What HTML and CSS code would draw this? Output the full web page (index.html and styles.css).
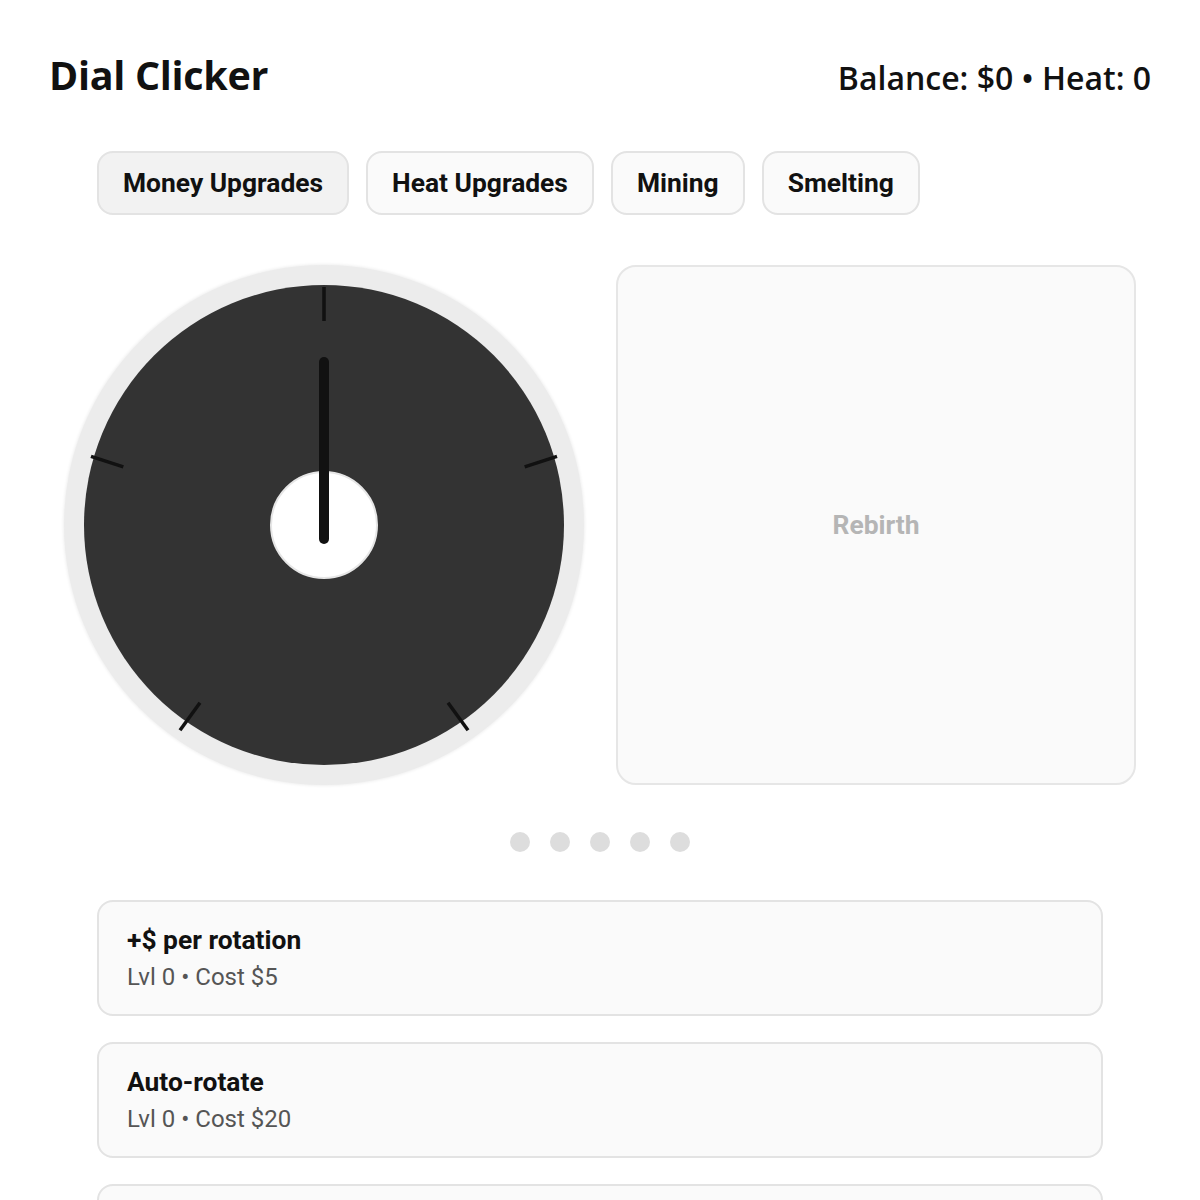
FILE: index.html
```html
<!DOCTYPE html>
<html>
<head>
<meta charset="utf-8">
<link rel="stylesheet" href="styles.css">
</head>
<body>
<div class="page">
  <header class="header">
    <h1 class="title">Dial Clicker</h1>
    <div class="stats">Balance: $0 • Heat: 0</div>
  </header>
  <div class="content">
    <nav class="tabs">
      <button class="tab active">Money Upgrades</button>
      <button class="tab">Heat Upgrades</button>
      <button class="tab">Mining</button>
      <button class="tab">Smelting</button>
    </nav>
  </div>
  <section class="stage">
    <div class="dial">
      <svg width="520" height="520" viewBox="0 0 520 520">
        <circle cx="260" cy="260" r="240" fill="#333333"/>
        <g stroke="#111111" stroke-width="3.5">
          <line x1="260" y1="22" x2="260" y2="56"/>
          <line x1="260" y1="22" x2="260" y2="56" transform="rotate(72 260 267)"/>
          <line x1="260" y1="22" x2="260" y2="56" transform="rotate(144 260 267)"/>
          <line x1="260" y1="22" x2="260" y2="56" transform="rotate(216 260 267)"/>
          <line x1="260" y1="22" x2="260" y2="56" transform="rotate(288 260 267)"/>
        </g>
        <circle cx="260" cy="260" r="53" fill="#ffffff" stroke="#e6e6e6" stroke-width="2"/>
        <line x1="260" y1="97" x2="260" y2="274" stroke="#111111" stroke-width="10" stroke-linecap="round"/>
      </svg>
    </div>
    <div class="panel">Rebirth</div>
  </section>
  <div class="dots">
    <span class="dot"></span><span class="dot"></span><span class="dot"></span><span class="dot"></span><span class="dot"></span>
  </div>
  <div class="content">
    <div class="cards">
      <div class="card">
        <div class="card-title">+$ per rotation</div>
        <div class="card-sub">Lvl 0 • Cost $5</div>
      </div>
      <div class="card">
        <div class="card-title">Auto-rotate</div>
        <div class="card-sub">Lvl 0 • Cost $20</div>
      </div>
      <div class="card">
        <div class="card-title">Heat sink</div>
        <div class="card-sub">Lvl 0 • Cost $50</div>
      </div>
    </div>
  </div>
</div>
</body>
</html>
```

FILE: styles.css
```css
* { box-sizing: border-box; }
html, body { margin: 0; padding: 0; background: #ffffff; }
body { font-family: Roboto, "Liberation Sans", sans-serif; color: #111111; }
.page { padding: 48px 49px 0; }
.header {
  display: flex;
  justify-content: space-between;
  align-items: baseline;
}
.title {
  margin: 0;
  font-family: "Open Sans", sans-serif;
  font-weight: 700;
  font-size: 39.5px;
  letter-spacing: -0.3px;
  color: #111111;
}
.stats {
  font-family: "Open Sans", sans-serif;
  font-weight: 600;
  font-size: 32px;
  color: #111111;
}
.content { padding: 0 48px; }
.tabs {
  display: flex;
  gap: 17px;
  margin-top: 49px;
}
.tab {
  height: 64px;
  padding: 0 24px;
  border: 2px solid #e3e3e3;
  border-radius: 16px;
  background: #fafafa;
  font-family: Roboto, sans-serif;
  font-weight: 700;
  font-size: 26.4px;
  color: #111111;
}
.tab.active { background: #f2f2f2; }
.stage {
  display: flex;
  justify-content: center;
  gap: 32px;
  margin: 50px -49px 0;
}
.dial {
  width: 520px;
  height: 520px;
  border-radius: 50%;
  background: #ececec;
  box-shadow: 0 0 3px 1px #f0f0f0;
}
.dial svg { display: block; }
.panel {
  width: 520px;
  height: 520px;
  border: 2px solid #e6e6e6;
  border-radius: 20px;
  background: #fafafa;
  display: flex;
  align-items: center;
  justify-content: center;
  font-weight: 700;
  font-size: 26.4px;
  color: #b5b5b5;
}
.dots {
  display: flex;
  justify-content: center;
  gap: 20px;
  margin-top: 47px;
}
.dot {
  width: 20px;
  height: 20px;
  border-radius: 50%;
  background: #dddddd;
}
.cards {
  display: flex;
  flex-direction: column;
  gap: 26px;
  margin-top: 48px;
}
.card {
  height: 116px;
  padding: 22.5px 28px 0;
  border: 2px solid #e3e3e3;
  border-radius: 16px;
  background: #fafafa;
}
.card-title {
  font-weight: 700;
  font-size: 26.4px;
  color: #111111;
}
.card-sub {
  margin-top: 8.4px;
  font-size: 24px;
  color: #555555;
}
```
